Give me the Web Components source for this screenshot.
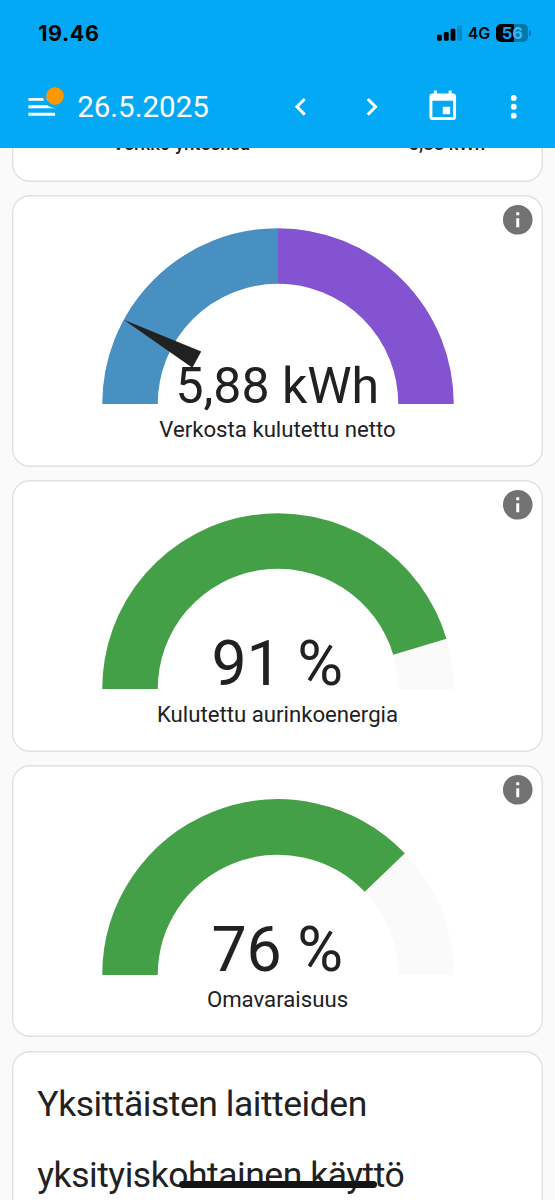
<!DOCTYPE html>
<html lang="fi">
<head>
<meta charset="utf-8">
<title>Energia</title>
<style>
    body {
        margin: 0;
        height: 1200px;
        overflow: hidden;
        background: #fafafa;
        color: #212121;
        font-family: Roboto, "Noto Sans", sans-serif;
    }
</style>
</head>
<body>
<energy-app>
    <phone-status slot="header" time="19.46" network="4G" battery="56"></phone-status>
    <date-toolbar slot="header">26.5.2025</date-toolbar>

    <energy-total label="Verkko yhteensä" value="5,88 kWh"></energy-total>
    <gauge-card value="5,88 kWh" size="50" baseline="-0.35" needle="28.6">Verkosta kulutettu netto</gauge-card>
    <gauge-card value="91 %" size="62.6" baseline="-1.1" angle="163.4">Kulutettu aurinkoenergia</gauge-card>
    <gauge-card value="76 %" size="62.6" baseline="-1.1" angle="136.2">Omavaraisuus</gauge-card>
    <title-card>Yksittäisten laitteiden yksityiskohtainen käyttö</title-card>
</energy-app>

<script>
const ICONS = {
    menu: 'M3,6H21V8H3V6M3,11H21V13H3V11M3,16H21V18H3V16Z',
    prev: 'M15.41,16.58L10.83,12L15.41,7.41L14,6L8,12L14,18L15.41,16.58Z',
    next: 'M8.59,16.58L13.17,12L8.59,7.41L10,6L16,12L10,18L8.59,16.58Z',
    calendar: 'M19,19H5V8H19M16,1V3H8V1H6V3H5C3.89,3 3,3.89 3,5V19A2,2 0 0,0 5,21H19A2,2 0 0,0 21,19V5C21,3.89 20.1,3 19,3H18V1M17,12H12V17H17V12Z',
    dots: 'M12,16A2,2 0 0,1 14,18A2,2 0 0,1 12,20A2,2 0 0,1 10,18A2,2 0 0,1 12,16M12,10A2,2 0 0,1 14,12A2,2 0 0,1 12,14A2,2 0 0,1 10,12A2,2 0 0,1 12,10M12,4A2,2 0 0,1 14,6A2,2 0 0,1 12,8A2,2 0 0,1 10,6A2,2 0 0,1 12,4Z',
    info: 'M13,9H11V7H13M13,17H11V11H13M12,2A10,10 0 0,0 2,12A10,10 0 0,0 12,22A10,10 0 0,0 22,12A10,10 0 0,0 12,2Z'
};

const CARD_STYLE = `
    :host {
        display: block;
        box-sizing: border-box;
        background: #fff;
        border-radius: 17.8px;
        box-shadow: inset 0 0 0 1.4px #e0e0e0;
    }
`;

class BaseElement extends HTMLElement {
    constructor() {
        super();
        this.attachShadow({ mode: 'open' });
    }

    connectedCallback() {
        const template = document.createElement('template');
        template.innerHTML = this.template();
        this.shadowRoot.replaceChildren(template.content.cloneNode(true));
    }
}

class MdIcon extends BaseElement {
    template() {
        return `
            <style>
                :host { display: block; width: 35.5px; height: 35.5px; }
                svg { display: block; width: 100%; height: 100%; fill: currentColor; }
            </style>
            <svg viewBox="0 0 24 24"><path d="${ICONS[this.getAttribute('name')]}"/></svg>
        `;
    }
}

class EnergyApp extends BaseElement {
    template() {
        return `
            <style>
                :host { display: block; position: relative; height: 1200px; overflow: hidden; }
                header {
                    position: relative;
                    z-index: 1;
                    height: 147.5px;
                    background: #03a9f4;
                    color: #fff;
                }
                main {
                    display: grid;
                    gap: 13.1px;
                    padding: 0 12px;
                    margin-top: -20.4px;
                }
                /* home indicator floats over the page */
                .home {
                    position: absolute;
                    left: 178.7px;
                    top: 1180.5px;
                    width: 198px;
                    height: 7.5px;
                    border-radius: 4px;
                    background: #141414;
                }
            </style>
            <header><slot name="header"></slot></header>
            <main><slot></slot></main>
            <div class="home"></div>
        `;
    }
}

class PhoneStatus extends BaseElement {
    template() {
        return `
            <style>
                :host {
                    display: flex;
                    align-items: center;
                    height: 64.6px;
                    padding: 1.5px 24px 0 38.2px;
                    box-sizing: border-box;
                    color: #000;
                    font-family: Inter, sans-serif;
                    font-weight: 700;
                }
                .time { flex: 1; font-size: 21.5px; letter-spacing: 0.6px; }
                .bars { width: 25px; height: 16px; margin-right: 6px; }
                .net { font-size: 16px; font-weight: 600; margin-right: 6px; }
                .battery {
                    width: 32px;
                    height: 18px;
                    border-radius: 5px;
                    background: linear-gradient(90deg, #000 56%, #0277ac 56%);
                    color: #12a5ec;
                    font-size: 16.5px;
                    line-height: 18px;
                    text-align: center;
                }
                .battery .rest { color: #39b9f2; }
                .tip { width: 1.7px; height: 6px; margin-left: 1px; border-radius: 0 2px 2px 0; background: #0277ac; }
            </style>
            <span class="time">${this.getAttribute('time')}</span>
            <svg class="bars" viewBox="0 0 25 16">
                <rect x="0" y="9.8" width="4.8" height="6" rx="1.3"/>
                <rect x="6.9" y="7" width="4.8" height="8.8" rx="1.3"/>
                <rect x="13.6" y="3.8" width="4.8" height="12" rx="1.3"/>
                <rect x="20.3" y="0.3" width="4.5" height="15.5" rx="1.3" fill="#0288c4"/>
            </svg>
            <span class="net">${this.getAttribute('network')}</span>
            <div class="battery">${this.getAttribute('battery')[0]}<span class="rest">${this.getAttribute('battery')[1]}</span></div>
            <div class="tip"></div>
        `;
    }
}

class DateToolbar extends BaseElement {
    template() {
        return `
            <style>
                :host {
                    display: flex;
                    align-items: center;
                    height: 82.9px;
                    padding: 1.2px 6px 0;
                    box-sizing: border-box;
                    font-size: 29.5px;
                }
                .btn { width: 71.05px; display: flex; justify-content: center; }
                .menu { position: relative; margin: 0 0 0 17.7px; }
                .badge {
                    position: absolute;
                    left: 19.2px;
                    top: -4.6px;
                    width: 17.8px;
                    height: 17.8px;
                    border: 3px solid #03a9f4;
                    border-radius: 50%;
                    background: #ff9800 padding-box;
                }
                .date { flex: 1; margin-left: 18px; }
            </style>
            <div class="menu"><md-icon name="menu"></md-icon><div class="badge"></div></div>
            <div class="date"><slot></slot></div>
            <div class="btn"><md-icon name="prev"></md-icon></div>
            <div class="btn"><md-icon name="next"></md-icon></div>
            <div class="btn"><md-icon name="calendar"></md-icon></div>
            <div class="btn"><md-icon name="dots"></md-icon></div>
        `;
    }
}

class EnergyTotal extends BaseElement {
    template() {
        return `
            <style>
                ${CARD_STYLE}
                :host {
                    display: flex;
                    justify-content: space-between;
                    height: 54.5px;
                    padding: 1.4px 58px 0 100.5px;
                    font-size: 18.5px;
                    font-weight: 500;
                    line-height: 30px;
                }
            </style>
            <span>${this.getAttribute('label')}</span>
            <span>${this.getAttribute('value')}</span>
        `;
    }
}

class GaugeCard extends BaseElement {
    // point on the dial, 0 deg at the left end and 180 deg at the right end
    point(angle) {
        const rad = angle * Math.PI / 180;
        return `${-40 * Math.cos(rad)} ${-40 * Math.sin(rad)}`;
    }

    arc(from, to, color) {
        return `<path d="M ${this.point(from)} A 40 40 0 0 1 ${this.point(to)}" stroke="${color}"/>`;
    }

    dial() {
        if (this.hasAttribute('needle')) {
            return this.arc(0, 90, '#488fc2') + this.arc(90, 180, '#8353d1') +
                `<path class="needle" d="M -25 -2.5 L -47.5 0 L -25 2.5 z" transform="rotate(${this.getAttribute('needle')})"/>`;
        }
        return this.arc(0, 180, '#fafafa') + this.arc(0, Number(this.getAttribute('angle')), '#43a047');
    }

    template() {
        return `
            <style>
                ${CARD_STYLE}
                :host {
                    display: flex;
                    flex-direction: column;
                    align-items: center;
                    position: relative;
                    height: 272.2px;
                    padding-top: 24.4px;
                }
                svg { flex: none; width: 370px; height: 185px; overflow: visible; margin-left: 1.4px; }
                path { fill: none; stroke-width: 15; }
                .needle { fill: #212121; }
                text { fill: #212121; text-anchor: middle; }
                .label { font-size: 22.2px; line-height: 26px; margin-top: 11.8px; }
                md-icon { position: absolute; right: 7.2px; top: 7px; color: #727272; }
            </style>
            <svg viewBox="-50 -50 100 50">
                ${this.dial()}
                <text x="-0.2" y="${this.getAttribute('baseline')}" font-size="${this.getAttribute('size') / 3.7}">${this.getAttribute('value')}</text>
            </svg>
            <div class="label"><slot></slot></div>
            <md-icon name="info"></md-icon>
        `;
    }
}

class TitleCard extends BaseElement {
    template() {
        return `
            <style>
                ${CARD_STYLE}
                :host {
                    height: 300px;
                    padding: 18.9px 60px 0 25.3px;
                    font-size: 35.5px;
                    line-height: 71px;
                    letter-spacing: -0.47px;
                }
            </style>
            <slot></slot>
        `;
    }
}

customElements.define('md-icon', MdIcon);
customElements.define('energy-app', EnergyApp);
customElements.define('phone-status', PhoneStatus);
customElements.define('date-toolbar', DateToolbar);
customElements.define('energy-total', EnergyTotal);
customElements.define('gauge-card', GaugeCard);
customElements.define('title-card', TitleCard);
</script>
</body>
</html>
